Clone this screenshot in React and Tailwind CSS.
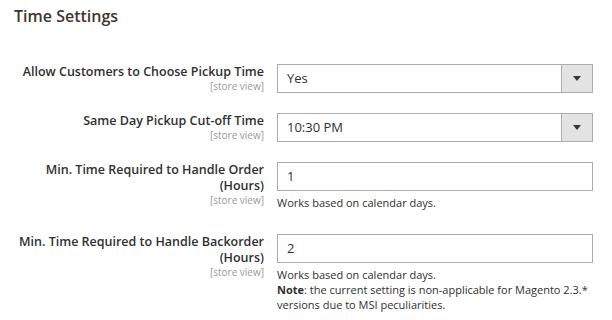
import React from 'react';

const Scope = () => (
  <div className="text-[10px] leading-[12px] text-[#999999]">[store view]</div>
);

const Label = ({ children }) => (
  <div className="text-right">
    <div className="text-[12.5px] leading-[16px] font-semibold text-[#303030]">{children}</div>
    <Scope />
  </div>
);

const Select = ({ value }) => (
  <div className="flex h-[29px] border border-[#adadad] bg-white">
    <div className="flex-1 flex items-center pl-[9px] text-[13px] text-[#303030]">{value}</div>
    <div className="w-[31px] flex items-center justify-center bg-[#e3e3e3] border-l border-[#adadad]">
      <svg width="8" height="5" viewBox="0 0 8 5">
        <path d="M0 0h8L4 5z" fill="#41362f" />
      </svg>
    </div>
  </div>
);

const Input = ({ value }) => (
  <div className="flex items-center h-[29px] border border-[#adadad] bg-white pl-[9px] text-[13px] text-[#303030]">
    {value}
  </div>
);

const Note = ({ children }) => (
  <div className="mt-[4px] text-[11px] leading-[15px] text-[#303030]">{children}</div>
);

const Row = ({ label, children }) => (
  <div className="grid grid-cols-[250px_316px] gap-x-[13px]">
    <Label>{label}</Label>
    <div>{children}</div>
  </div>
);

export default function App() {
  return (
    <div
      className="w-[612px] h-[320px] bg-white px-[14px] pt-[5px] overflow-hidden"
      style={{ fontFamily: '"Open Sans", "Noto Sans", sans-serif' }}
    >
      <h2 className="text-[16px] leading-[22px] font-semibold text-[#41362f]">Time Settings</h2>

      <div className="mt-[37px] flex flex-col gap-[20px]">
        <Row label="Allow Customers to Choose Pickup Time">
          <Select value="Yes" />
        </Row>
        <Row label="Same Day Pickup Cut-off Time">
          <Select value="10:30 PM" />
        </Row>
        <Row label="Min. Time Required to Handle Order (Hours)">
          <Input value="1" />
          <Note>Works based on calendar days.</Note>
          <div className="h-[4px]" />
        </Row>
        <Row label="Min. Time Required to Handle Backorder (Hours)">
          <Input value="2" />
          <Note>
            Works based on calendar days.
            <br />
            <span className="font-bold">Note</span>: the current setting is non-applicable for Magento 2.3.*
            versions due to MSI peculiarities.
          </Note>
        </Row>
      </div>
    </div>
  );
}
